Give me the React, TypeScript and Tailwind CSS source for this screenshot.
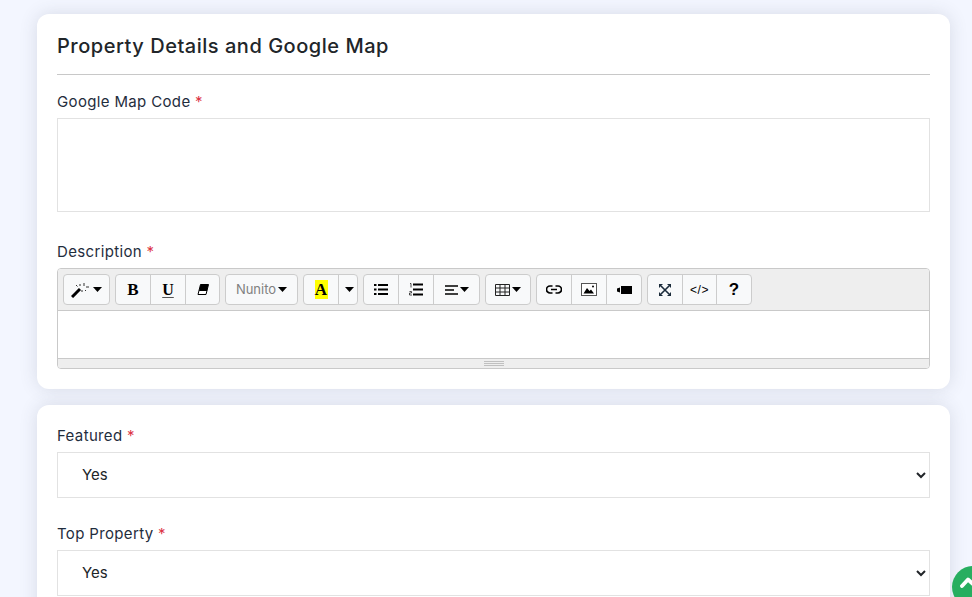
import type { ReactNode } from "react";

const Caret = () => (
  <svg width="9" height="5" viewBox="0 0 9 5" className="ml-[2px]">
    <path d="M0 0h9L4.5 5z" fill="#000" />
  </svg>
);

const Btn = ({ w, children, last }: { w: string; children: ReactNode; last?: boolean }) => (
  <div className={`${w} h-full flex items-center justify-center ${last ? "" : "border-r border-[#ccc]"}`}>
    {children}
  </div>
);

const Group = ({ children }: { children: ReactNode }) => (
  <div className="flex h-[31px] bg-[#f8f9fa] border border-[#ccc] rounded-[4px] text-black">{children}</div>
);

const Label = ({ text }: { text: string }) => (
  <label className="block text-[15px] leading-[20px] text-[#1f2d3d] tracking-[0.35px]">
    {text} <span className="text-[#dc3545]">*</span>
  </label>
);

const YesSelect = () => (
  <select className="block w-full h-[46px] bg-white border border-[#e2e2e2] pl-[20px] pr-1 pb-[2px] text-[15px] text-[#212529] outline-none">
    <option>Yes</option>
  </select>
);

export default function App() {
  return (
    <div className="relative h-[597px] w-[972px] overflow-hidden bg-[#f3f6ff] pl-[37px] pr-[22px] pt-[14px] font-['Inter','Liberation_Sans',sans-serif]">
      <div className="bg-white rounded-[12px] shadow-[0_0_18px_rgba(60,70,90,0.15)] px-[20px] h-[375px]">
        <h2 className="pt-[19px] text-[20px] leading-[26px] font-medium text-[#212529] tracking-[0.52px]">
          Property Details and Google Map
        </h2>
        <div className="mt-[15px] border-t border-[#c8c8c8]" />
        <div className="mt-[17px]">
          <Label text="Google Map Code" />
        </div>
        <div className="mt-[6px] h-[94px] border border-[#e2e2e2]" />
        <div className="mt-[30px]">
          <Label text="Description" />
        </div>
        <div className="mt-[6px] h-[101px] border border-[#c9c9c9] rounded-[4px] overflow-hidden flex flex-col">
          <div className="h-[42px] shrink-0 bg-[#eeeeee] border-b border-[#c9c9c9] pt-[5px] pl-[5px] flex gap-[5px]">
            <Group>
              <Btn w="w-[45px]" last>
                <svg width="20" height="16" viewBox="0 0 20 16">
                  <path d="M1 15 9 7" stroke="#000" strokeWidth="3" />
                  <path d="M9 2v2M13 1v3M5 3l1.500 1.500M14 8l1 1M11 8v2M15 5h3" stroke="#333" strokeWidth="1" />
                </svg>
                <Caret />
              </Btn>
            </Group>
            <Group>
              <Btn w="w-[35px]">
                <span className="font-['Liberation_Serif',serif] font-bold text-[17px]">B</span>
              </Btn>
              <Btn w="w-[35px]">
                <span className="font-['Liberation_Serif',serif] font-bold text-[16px] underline underline-offset-2 decoration-[#555]">U</span>
              </Btn>
              <Btn w="w-[33px]" last>
                <svg width="12" height="11" viewBox="0 0 12 11">
                  <path d="M3.500 0.500H11.500L9 10.500H1z" fill="#fff" stroke="#000" />
                  <path d="M3.500 0.500H11.500L10 7H2z" fill="#000" />
                </svg>
              </Btn>
            </Group>
            <Group>
              <Btn w="w-[71px]" last>
                <span className="text-[13px] text-[#808080]">Nunito</span>
                <Caret />
              </Btn>
            </Group>
            <Group>
              <Btn w="w-[35px]">
                <span className="bg-[#ffff00] w-[13px] h-[19px] flex items-center justify-center font-['Liberation_Serif',serif] font-bold text-[17px]">A</span>
              </Btn>
              <Btn w="w-[18px]" last>
                <Caret />
              </Btn>
            </Group>
            <Group>
              <Btn w="w-[35px]">
                <svg width="14" height="11" viewBox="0 0 14 11">
                  <path d="M4 1h10M4 5.500h10M4 10h10" stroke="#000" strokeWidth="2" />
                  <path d="M0 0h2.500v2H0zM0 4.500h2.500v2H0zM0 9h2.500v2H0z" fill="#000" />
                </svg>
              </Btn>
              <Btn w="w-[35px]">
                <svg width="14" height="13" viewBox="0 0 14 13">
                  <path d="M4 1.500h10M4 6.500h10M4 11.500h10" stroke="#000" strokeWidth="2" />
                  <path d="M1 .5h1v4M.5 8.500h2v1.500h-2v2h2.500" stroke="#222" strokeWidth=".8" fill="none" />
                </svg>
              </Btn>
              <Btn w="w-[45px]" last>
                <svg width="13" height="10" viewBox="0 0 13 10">
                  <path d="M0 1h13M0 5h9M0 9h13" stroke="#000" strokeWidth="1.300" />
                </svg>
                <Caret />
              </Btn>
            </Group>
            <Group>
              <Btn w="w-[44px]" last>
                <svg width="15" height="12" viewBox="0 0 15 12">
                  <path d="M.5.500h14v11H.5zM.5 4h14M.5 8h14M5 .5v11M10 .5v11" stroke="#222" fill="none" />
                </svg>
                <Caret />
              </Btn>
            </Group>
            <Group>
              <Btn w="w-[35px]">
                <svg width="16" height="9" viewBox="0 0 16 9" fill="none" stroke="#000" strokeWidth="1.700">
                  <path d="M6.500 1H4a3.500 3.500 0 0 0 0 7h2.500M9.500 1H12a3.500 3.500 0 0 1 0 7H9.500M5 4.500h6" />
                </svg>
              </Btn>
              <Btn w="w-[35px]">
                <svg width="16" height="13" viewBox="0 0 16 13">
                  <rect x=".5" y=".5" width="15" height="12" fill="#fff" stroke="#555" />
                  <path d="M2.500 10.500 6 5l2.500 3 1.500-1.500 3 4z" fill="#000" />
                  <circle cx="12" cy="3.500" r="1" fill="#000" />
                </svg>
              </Btn>
              <Btn w="w-[34px]" last>
                <svg width="15" height="8" viewBox="0 0 15 8">
                  <path d="M4 0h11v8H4zM0 2.500l3-1v5l-3-1z" fill="#000" />
                </svg>
              </Btn>
            </Group>
            <Group>
              <Btn w="w-[35px]">
                <svg width="12" height="12" viewBox="0 0 12 12" fill="none" stroke="#1a2a3a" strokeWidth="1.600">
                  <path d="M2 2l8 8M10 2 2 10" />
                  <path d="M0 4V0h4L0 4zM12 4V0H8L12 4zM0 8V12h4L0 8zM12 8V12H8L12 8z" fill="#1a2a3a" stroke="none" />
                </svg>
              </Btn>
              <Btn w="w-[34px]">
                <span className="text-[12px] tracking-[0.5px] font-['Liberation_Sans',sans-serif]">&lt;/&gt;</span>
              </Btn>
              <Btn w="w-[34px]" last>
                <span className="text-[17px] font-bold font-['Liberation_Sans',sans-serif]">?</span>
              </Btn>
            </Group>
          </div>
          <div className="flex-1 bg-white" />
          <div className="h-[10px] shrink-0 bg-[#eeeeee] border-t border-[#c9c9c9] flex flex-col items-center justify-center gap-[1px]">
            <div className="w-[20px] h-px bg-[#c0c0c0]" />
            <div className="w-[20px] h-px bg-[#c0c0c0]" />
            <div className="w-[20px] h-px bg-[#c0c0c0]" />
          </div>
        </div>
      </div>

      <div className="mt-[16px] bg-white rounded-t-[12px] shadow-[0_0_18px_rgba(60,70,90,0.15)] px-[20px] pt-[21px] h-[300px]">
        <Label text="Featured" />
        <div className="mt-[6px]">
          <YesSelect />
        </div>
        <div className="mt-[26px]">
          <Label text="Top Property" />
        </div>
        <div className="mt-[6px]">
          <YesSelect />
        </div>
      </div>

      <div className="absolute left-[952px] top-[566px] w-[42px] h-[42px] rounded-full bg-[#27ae60] flex pl-[8px] pt-[10px]">
        <svg width="22" height="14" viewBox="0 0 22 14" fill="none" stroke="#fff" strokeWidth="3.800" strokeLinecap="round" strokeLinejoin="round">
          <path d="M2 10 8 3.500l7 6.500" />
        </svg>
      </div>
    </div>
  );
}
